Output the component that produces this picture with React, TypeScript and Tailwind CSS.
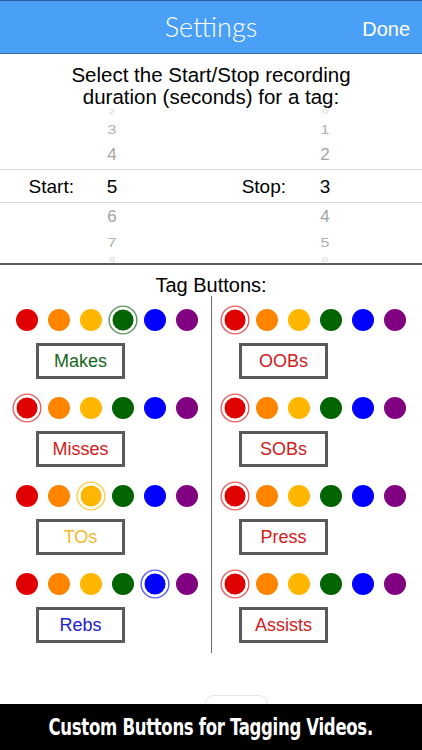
import React from 'react'

const COLORS = ['#e00000', '#ff8400', '#ffb600', '#006400', '#0000ff', '#800080']
const RING = ['#e86060', '#ffa850', '#ffcc50', '#5a945a', '#5a5aff', '#a850a8']

interface Tag {
  label: string
  selected: number
  text: string
}

const LEFT: Tag[] = [
  { label: 'Makes', selected: 3, text: '#17661a' },
  { label: 'Misses', selected: 0, text: '#d02020' },
  { label: 'TOs', selected: 2, text: '#f2b62c' },
  { label: 'Rebs', selected: 4, text: '#2020d0' },
]

const RIGHT: Tag[] = [
  { label: 'OOBs', selected: 0, text: '#d02020' },
  { label: 'SOBs', selected: 0, text: '#d02020' },
  { label: 'Press', selected: 0, text: '#d02020' },
  { label: 'Assists', selected: 0, text: '#d02020' },
]

function Dot({ color, ring, selected }: { color: string; ring: string; selected: boolean }) {
  return (
    <svg width="30" height="30" viewBox="0 0 30 30" className="shrink-0">
      {selected && <circle cx="15" cy="15" r="13.9" fill="none" stroke={ring} strokeWidth="1.4" />}
      <circle cx="15" cy="15" r={selected ? 10.5 : 11} fill={color} />
    </svg>
  )
}

function TagColumn({ tags, left, boxLeft }: { tags: Tag[]; left: number; boxLeft: number }) {
  return (
    <div className="flex flex-col" style={{ paddingLeft: left }}>
      {tags.map(t => (
        <div key={t.label} className="flex flex-col mb-[14px]">
          <div className="flex gap-[2px]">
            {COLORS.map((c, i) => (
              <Dot key={c} color={c} ring={RING[i]} selected={i === t.selected} />
            ))}
          </div>
          <div
            className="mt-[8px] w-[89px] h-[36px] border-[3px] border-[#5a5a5a] flex items-center justify-center text-[18px]"
            style={{ color: t.text, marginLeft: boxLeft }}
          >
            {t.label}
          </div>
        </div>
      ))}
    </div>
  )
}

interface PickRow {
  h: string
  size: string
  color: string
  a: string
  b: string
}

const ABOVE: PickRow[] = [
  { h: 'h-[15px]', size: 'text-[12px] scale-y-[0.55]', color: 'text-[#dadada]', a: '2', b: '0' },
  { h: 'h-[21px]', size: 'text-[16px] scale-y-[0.85]', color: 'text-[#b0b0b0]', a: '3', b: '1' },
  { h: 'h-[29px]', size: 'text-[17px]', color: 'text-[#a4a4a4]', a: '4', b: '2' },
]

const BELOW: PickRow[] = [
  { h: 'h-[28px]', size: 'text-[17px]', color: 'text-[#a4a4a4]', a: '6', b: '4' },
  { h: 'h-[24px]', size: 'text-[16px] scale-y-[0.85]', color: 'text-[#b0b0b0]', a: '7', b: '5' },
  { h: 'h-[9px]', size: 'text-[12px] scale-y-[0.55]', color: 'text-[#dadada]', a: '8', b: '6' },
]

function Row({ r }: { r: PickRow }) {
  return (
    <div className={`flex items-center shrink-0 ${r.h} ${r.color}`}>
      <div className="w-[74px]" />
      <div className={`w-[76px] text-center ${r.size}`}>{r.a}</div>
      <div className="w-[136px]" />
      <div className={`w-[78px] text-center ${r.size}`}>{r.b}</div>
    </div>
  )
}

export default function App() {
  return (
    <div
      className="w-[422px] h-[750px] flex flex-col bg-white text-black overflow-hidden"
      style={{ fontFamily: '"Liberation Sans", Arial, sans-serif' }}
    >
      {/* header */}
      <div className="h-[54px] shrink-0 bg-[#4a9ff6] border-t border-[#2f5f90] border-b border-b-[#3a6ea8] relative flex items-center justify-center">
        <span className="text-white text-[27px] font-light" style={{ fontFamily: 'Lato, "Open Sans", sans-serif' }}>
          Settings
        </span>
        <span className="absolute right-[12px] top-[13px] text-white text-[20px]">Done</span>
      </div>

      <div className="h-[50px] shrink-0 pt-[10px] text-center text-[20.5px] leading-[22px]">
        <p>Select the Start/Stop recording</p>
        <p>duration (seconds) for a tag:</p>
      </div>

      {/* picker */}
      <div className="h-[161px] shrink-0 overflow-hidden flex flex-col border-b-2 border-[#5c5c5c]">
        {ABOVE.map(r => <Row key={r.a} r={r} />)}
        <div className="h-[34px] shrink-0 flex items-center border-y border-[#d8d8d8] text-[19px] pt-[2px]">
          <div className="w-[74px] text-right">Start:</div>
          <div className="w-[76px] text-center">5</div>
          <div className="w-[136px] text-right">Stop:</div>
          <div className="w-[78px] text-center">3</div>
        </div>
        {BELOW.map(r => <Row key={r.a} r={r} />)}
      </div>

      <div className="text-center text-[20px] leading-[26px] pt-[7px]">Tag Buttons:</div>

      {/* tag grid */}
      <div className="flex">
        <div className="w-[211px] pt-[7px]">
          <TagColumn tags={LEFT} left={12} boxLeft={24} />
        </div>
        <div className="w-px bg-[#6a6a6a] h-[357px] -mt-[2px]" />
        <div className="w-[210px] pt-[7px]">
          <TagColumn tags={RIGHT} left={8} boxLeft={19} />
        </div>
      </div>

      <div className="mt-auto flex flex-col">
        <div className="ml-[205px] w-[63px] h-[9px] border-t border-x border-[#e4e4e4] rounded-t-[14px]" />
        <div className="h-[46px] bg-black flex items-center justify-center">
          <span
            className="text-white text-[23px] font-bold tracking-[-0.4px] scale-x-[0.8] whitespace-nowrap"
            style={{ fontFamily: '"DejaVu Sans Condensed", "Liberation Sans Narrow", sans-serif' }}
          >
            Custom Buttons for Tagging Videos.
          </span>
        </div>
      </div>
    </div>
  )
}
